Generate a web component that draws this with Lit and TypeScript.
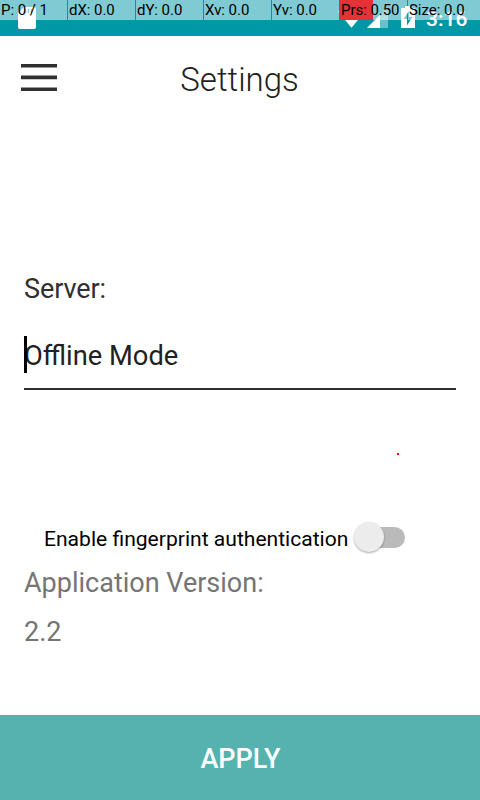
import { LitElement, html, css, svg } from "lit";
import { customElement } from "lit/decorators.js";

const POINTER_CELLS = ["P: 0 / 1", "dX: 0.0", "dY: 0.0", "Xv: 0.0", "Yv: 0.0", "Prs: 0.50", "Size: 0.0"];

@customElement("status-bar")
export class StatusBar extends LitElement {
  static styles = css`
    :host { display: block; position: relative; height: 36px; background: #0097a7; overflow: hidden; }
    .icons { display: block; }
    .time { font: 500 21px Roboto, sans-serif; fill: #fff; }
    .debug { position: absolute; inset: 0 0 auto; height: 20px; display: grid; grid-template-columns: repeat(6, 67px) 73px; column-gap: 1px; }
    .cell { background: rgba(255, 255, 255, 0.5); color: #000; font: 15px/20px Roboto, sans-serif; letter-spacing: -0.05px; padding-left: 1px; white-space: pre; }
    .pressure { background: linear-gradient(to right, #e53238 34px, rgba(255, 255, 255, 0.5) 34px); margin-left: -1px; padding-left: 2px; }
  `;
  render() {
    return html`
      <svg class="icons" width="480" height="36" viewBox="0 0 480 36">
        ${svg`
          <path d="M24 7H34a2 2 0 0 1 2 2V27a2 2 0 0 1-2 2H20a2 2 0 0 1-2-2V13z" fill="#fff"/>
          <path d="M25.500 9v4M28.500 9v4M31.500 9v4" stroke="#0097a7" stroke-width="1.300"/>
          <path d="M338 11.500Q351.500 3 365 11.500L351.500 27.800z" fill="#fff"/>
          <path d="M388 7V28H367z" fill="#fff" opacity=".3"/>
          <path d="M380 16h8v12h-8z" fill="#fff" opacity=".15"/>
          <path d="M380 15V28H367z" fill="#fff"/>
          <path d="M405 6h6v2h4v20h-14V8h4z" fill="#fff"/>
          <path d="M409 11v6h3.500l-5.500 8.500v-6.500h-3.500z" fill="#0097a7"/>
          <text class="time" x="426" y="26">3:16</text>
        `}
      </svg>
      <div class="debug">
        ${POINTER_CELLS.map((t) => html`<div class="cell ${t.startsWith("Prs") ? "pressure" : ""}">${t}</div>`)}
      </div>
    `;
  }
}

@customElement("app-root")
export class AppRoot extends LitElement {
  static styles = css`
    :host { display: flex; flex-direction: column; position: relative; width: 480px; height: 800px; background: #fff; font-family: Roboto, sans-serif; overflow: hidden; }
    .header { display: grid; grid-template-columns: 78px 1fr 78px; height: 84px; align-items: center; }
    .menu { margin-left: 21px; }
    .title { text-align: center; font-size: 33px; font-weight: 300; line-height: 40px; color: #212121; padding: 4px 1px 0 0; }
    .form { flex: 1; padding: 151px 24px 0; display: flex; flex-direction: column; }
    .label { font-size: 27px; line-height: 36px; letter-spacing: -0.1px; color: #303030; }
    .field { display: flex; align-items: center; margin-top: 26px; height: 57px; border-bottom: 2px solid #303033; box-sizing: border-box; font-size: 27px; color: #212121; position: relative; padding-bottom: 9px; }
    .value { font-size: 27.3px; }
    .caret { position: absolute; left: 0; top: 3px; width: 3px; height: 37px; background: #000; }
    .toggle { display: flex; align-items: center; height: 36px; margin: 131px 0 0 20px; gap: 6px; font-size: 21.08px; color: #000; }
    .caption { margin-bottom: 2px; }
    .switch { display: flex; align-items: center; width: 51px; height: 31px; margin-bottom: 4px; }
    .thumb { width: 30px; height: 30px; border-radius: 50%; background: #ececec; box-shadow: 0 1px 2px rgba(0, 0, 0, 0.35); z-index: 1; }
    .track { width: 36px; height: 21px; margin-left: -15px; border-radius: 0 11px 11px 0; background: #bababa; }
    .version { font-size: 27px; line-height: 36px; color: #757575; margin-top: 8px; }
    .number { margin-top: 13px; }
    .apply { height: 85px; border: 0; padding: 2px 0 0 1px; background: #55b2ae; color: #fff; font: 500 27px Roboto, sans-serif; }
    .touch { position: absolute; left: 397px; top: 453px; width: 2px; height: 2px; background: #f00; }
  `;
  render() {
    return html`
      <status-bar></status-bar>
      <div class="header">
        <svg class="menu" width="36" height="28" viewBox="0 0 36 28">
          <path d="M0 1.800H36M0 13.400H36M0 25.200H36" stroke="#303030" stroke-width="3.600"/>
        </svg>
        <div class="title">Settings</div>
      </div>
      <div class="form">
        <div class="label">Server:</div>
        <div class="field"><span class="value">Offline Mode</span><i class="caret"></i></div>
        <div class="toggle">
          <span class="caption">Enable fingerprint authentication</span>
          <span class="switch"><i class="thumb"></i><i class="track"></i></span>
        </div>
        <div class="version">Application Version:</div>
        <div class="version number">2.2</div>
      </div>
      <button class="apply">APPLY</button>
      <i class="touch"></i>
    `;
  }
}
